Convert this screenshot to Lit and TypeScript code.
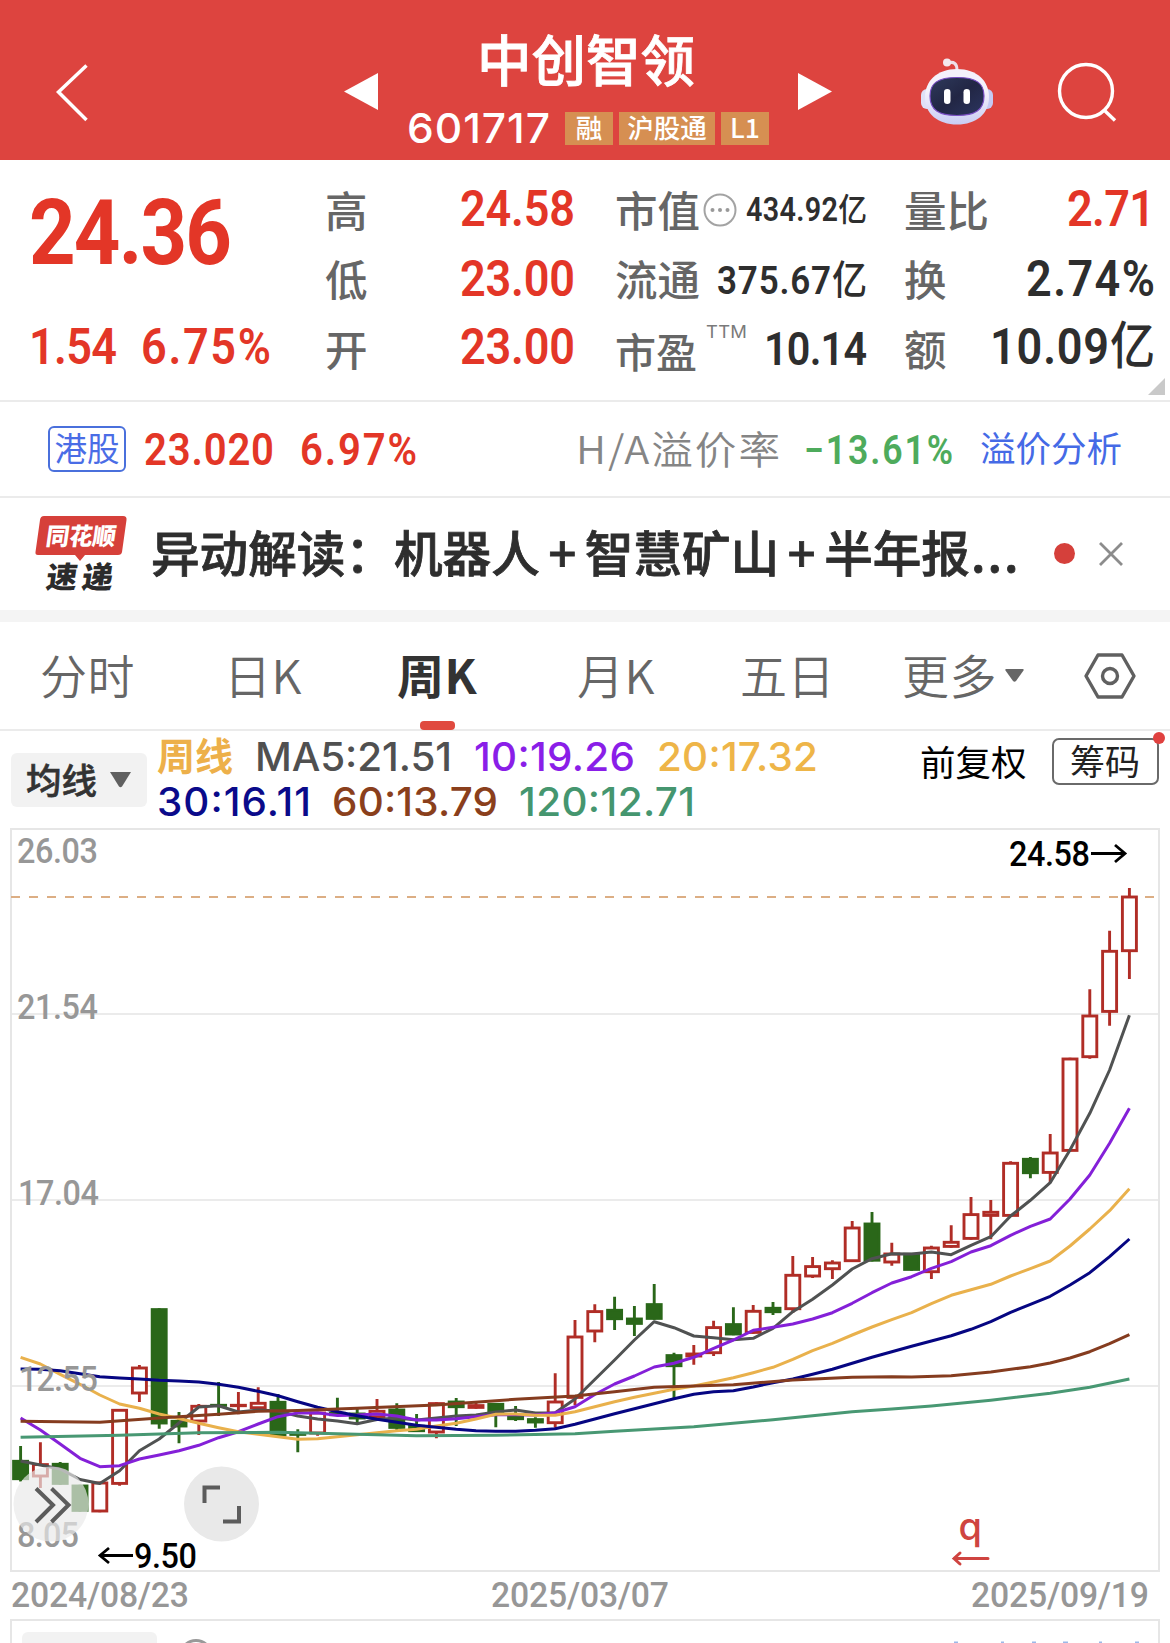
import { LitElement, html, svg, css } from "lit";
import { customElement, property } from "lit/decorators.js";

/* Cap height as a share of the font size, per family. */
const CAP: Record<string, number> = { din: 0.711, date: 0.711, cjk: 0.733, sf: 0.727 };
/* Horizontal scale of the glyphs, per face. */
const SCALE: Record<string, number> = { din: 0.89, date: 0.94, cjk: 1.07, sf: 1.03 };

/** One run of figures, set to a fixed width; its box is as high as its capitals. */
@customElement("fit-text")
class FitText extends LitElement {
  @property() text = "";
  @property({ type: Number }) w = 100;
  @property({ type: Number }) cap = 30;
  @property() face = "din";

  static styles = css`
    :host { display: block; flex: none; line-height: 0; }
    svg { display: block; overflow: visible; }
    text { fill: currentColor; }
    .din, .date { font-family: Roboto, "Noto Sans CJK SC", sans-serif; }
    .cjk { font-family: "Noto Sans CJK SC", sans-serif; }
    .sf { font-family: Inter, "Noto Sans CJK SC", sans-serif; }
    .unit { font-weight: 500; }
  `;

  render() {
    const k = SCALE[this.face];
    const unit = this.text.endsWith("亿");
    const body = unit ? this.text.slice(0, -1) : this.text;
    return html`<svg width=${this.w} height=${this.cap}>
      <text class=${this.face} x="0" y=${this.cap} font-size=${this.cap / CAP[this.face]}
        transform="scale(${k} 1)" textLength=${this.w / k} lengthAdjust="spacing">${body}${unit ? svg`<tspan class="unit">亿</tspan>` : ""}</text>
    </svg>`;
  }
}

const fit = (text: string, w: number, cap: number, cls = "", face = "din") =>
  html`<fit-text class=${cls} .text=${text} .w=${w} .cap=${cap} .face=${face}></fit-text>`;

/* high, body top, body bottom, low, in page pixels; u = rise, d = fall */
type Candle = [number, number, number, number, "u" | "d"];
const CANDLES: Candle[] = [
  [1446, 1460, 1480, 1481.5, "d"], [1442.3, 1463.3, 1477.3, 1488, "u"], [1462, 1463, 1484.7, 1484.7, "d"],
  [1484.7, 1484.7, 1511.7, 1511.7, "d"], [1481.7, 1481.7, 1512.3, 1512.3, "u"], [1409, 1409, 1484.7, 1485.7, "u"],
  [1365, 1366.7, 1394.3, 1402, "u"], [1308.3, 1308.3, 1424.3, 1428.7, "d"], [1412, 1420, 1427.3, 1443.3, "d"],
  [1404, 1405, 1422.3, 1435, "u"], [1382, 1404, 1406.7, 1416, "d"], [1392, 1404, 1407, 1414.3, "u"],
  [1387.3, 1402, 1409, 1409, "u"], [1394, 1401, 1436.3, 1436.3, "d"], [1429.3, 1433, 1435.5, 1452.3, "d"],
  [1411.7, 1411.7, 1434.3, 1435.7, "u"], [1397.7, 1412, 1416, 1416, "d"], [1409, 1412.7, 1419.3, 1423, "d"],
  [1399, 1410, 1418, 1418, "u"], [1403.3, 1408.7, 1428.7, 1430, "d"], [1414, 1425, 1432, 1432, "d"],
  [1402.3, 1402.3, 1433.3, 1438.3, "u"], [1398, 1400.7, 1408, 1426, "d"], [1402.7, 1404.3, 1408.7, 1408.7, "u"],
  [1403, 1403, 1414.7, 1427.3, "d"], [1406, 1414.7, 1420, 1421, "d"], [1417.3, 1418.3, 1423.3, 1427.7, "d"],
  [1373.3, 1400.7, 1424, 1427.7, "u"], [1320, 1335.7, 1398.7, 1405, "u"], [1304.3, 1310.3, 1332.3, 1342.3, "u"],
  [1296.7, 1309, 1320, 1330, "d"], [1306, 1317.7, 1324.7, 1336, "d"], [1284, 1303.3, 1319.7, 1319.7, "d"],
  [1352.7, 1354.3, 1367, 1398.3, "d"], [1345, 1352.7, 1357.3, 1364.7, "u"], [1320.7, 1326.3, 1354, 1356, "u"],
  [1307.3, 1323.3, 1335.3, 1335.3, "d"], [1305, 1310, 1333.7, 1333.7, "u"], [1302, 1307, 1313, 1315, "d"],
  [1256, 1274, 1310, 1313, "u"], [1257, 1265.3, 1277.3, 1278, "u"], [1260.3, 1261.7, 1270, 1279, "u"],
  [1221, 1226.7, 1262, 1262, "u"], [1212, 1222.7, 1261.5, 1261.5, "d"], [1242.7, 1252.7, 1263.3, 1265.7, "u"],
  [1253, 1253, 1270.7, 1270.7, "d"], [1245.7, 1246.7, 1273, 1279, "u"], [1225.3, 1241, 1247.7, 1247.7, "u"],
  [1197, 1213.3, 1239.7, 1239.7, "u"], [1200, 1211, 1216.7, 1239.3, "u"], [1161.3, 1162, 1216.7, 1216.7, "u"],
  [1157, 1158, 1174, 1178.3, "d"], [1134, 1151.7, 1173.7, 1182.7, "u"], [1057.7, 1057.7, 1151.7, 1151.7, "u"],
  [989.3, 1014.7, 1058, 1058.7, "u"], [930.7, 950, 1012.7, 1025.7, "u"], [888, 895.7, 952, 979, "u"],
];

const seq = (ys: number[]): [number, number][] => ys.map((y, i) => [i, y]);
const LINES: { cls: string; pts: [number, number][] }[] = [
  { cls: "ma5", pts: seq([1461, 1465, 1469, 1479.5, 1483.5, 1470.7, 1450.7, 1439, 1423, 1407, 1405.7, 1412, 1410, 1411, 1416, 1419, 1421, 1423.7, 1419.5, 1418, 1420, 1418, 1416, 1415, 1412, 1410, 1413, 1412.7, 1399, 1379.5, 1360, 1340, 1321.7, 1327.7, 1336, 1337.7, 1339.7, 1338.3, 1328.3, 1311.7, 1299.3, 1285, 1269, 1258.7, 1253.7, 1254, 1252, 1254.7, 1245.3, 1236.7, 1216, 1200.3, 1182.7, 1150, 1113.3, 1070, 1015.3]) },
  { cls: "ma10", pts: seq([1418, 1430, 1444, 1458.3, 1466.7, 1465.7, 1459, 1455, 1450.7, 1445.3, 1437.7, 1431.7, 1424, 1416.7, 1412.9, 1412.7, 1415.5, 1415, 1414, 1416, 1420, 1420, 1418.7, 1416.7, 1414.7, 1414.7, 1415, 1412.7, 1406.7, 1394.5, 1384, 1376, 1367, 1363.3, 1357.3, 1348.3, 1340, 1330.3, 1327.3, 1324, 1319, 1312.7, 1303.3, 1292.7, 1283, 1276.7, 1268.3, 1261.7, 1252, 1245.7, 1235.3, 1226.3, 1219, 1199, 1175, 1143.3, 1108.3]) },
  { cls: "ma20", pts: seq([1357.3, 1364, 1374.3, 1384.3, 1395, 1404, 1408.3, 1414, 1418.5, 1423.3, 1427.7, 1431.7, 1434.3, 1436.7, 1439.3, 1438.7, 1436.7, 1434.7, 1432.7, 1430.7, 1429.3, 1426, 1423.3, 1419, 1414.3, 1414, 1415.3, 1415.3, 1411.7, 1406.7, 1401.7, 1397.3, 1393.3, 1389.3, 1386, 1382, 1377.7, 1372.7, 1367.3, 1359.3, 1350.7, 1343.3, 1335, 1327, 1319.7, 1312.7, 1303.7, 1295.3, 1289.7, 1284.3, 1276, 1268.7, 1261, 1246, 1229, 1210.7, 1188.7]) },
  { cls: "ma120", pts: [[0, 1437.3], [5, 1435.3], [9, 1432.7], [13, 1432.3], [17, 1434.3], [20, 1435.7], [24, 1435.3], [28, 1433.7], [30, 1431.3], [34, 1426.7], [38, 1419.7], [42, 1411.7], [44, 1409], [46, 1406], [49, 1400.3], [52, 1393.3], [54, 1387.3], [56, 1379]] },
  { cls: "ma30", pts: seq([1369, 1369.3, 1370.7, 1373.7, 1376.7, 1378, 1379, 1380.3, 1380.9, 1382, 1384.3, 1387.3, 1391.3, 1395.7, 1401.7, 1407.3, 1411.7, 1415.7, 1419.3, 1422.3, 1425.3, 1427.3, 1429.3, 1430.7, 1431.3, 1431.3, 1430.3, 1428.7, 1424.3, 1419, 1413.7, 1408.7, 1403.7, 1398.7, 1394.3, 1391.7, 1390.7, 1387, 1382.7, 1379, 1374.3, 1369.3, 1363.3, 1357.3, 1351.7, 1346.3, 1341, 1335.7, 1329.3, 1321.7, 1312.3, 1304.3, 1296.3, 1285, 1272.7, 1256.7, 1239]) },
  { cls: "ma60", pts: [[0, 1421.3], [4, 1422.3], [7, 1418], [10, 1414.3], [12, 1411.3], [14, 1410.5], [17, 1408.3], [21, 1405], [25, 1399.3], [28, 1396], [30, 1391.7], [32, 1387.3], [36, 1384.7], [39, 1380], [42, 1377.3], [44, 1376.7], [45, 1377], [47, 1375.7], [49, 1372], [51, 1366.7], [52, 1363], [53, 1358], [54, 1351.7], [55, 1343.7], [56, 1334.7]] },
];

const cx = (i: number) => 20.6 + 19.8 * i;
const path = (pts: [number, number][]) => pts.map(([i, y], k) => `${k ? "L" : "M"}${cx(i).toFixed(1)} ${y}`).join("");

@customElement("k-chart")
class KChart extends LitElement {
  static styles = css`
    :host { display: block; height: 745px; }
    svg { display: block; overflow: visible; }
    .frame { fill: none; stroke: #e6e6e6; stroke-width: 2; }
    .grid { stroke: #ebebeb; stroke-width: 2; }
    .dash { stroke: #dcae84; stroke-width: 1.8; stroke-dasharray: 9 9; }
    .u { stroke: #b02d26; stroke-width: 2.9; fill: #fff; }
    .d { stroke: #2a6719; stroke-width: 2.9; fill: #2a6719; }
    .line { fill: none; stroke-width: 3; stroke-linejoin: round; }
    .ma5 { stroke: #505252; }
    .ma10 { stroke: #8420d8; }
    .ma20 { stroke: #e9b14c; }
    .ma30 { stroke: #060682; }
    .ma60 { stroke: #853c1f; }
    .ma120 { stroke: #489873; }
    text { font-family: Roboto, "Noto Sans CJK SC", sans-serif; font-size: 36px; fill: #979797; font-weight: 500; }
    .peak { fill: #000; stroke: none; }
    .arrow { stroke: #000; stroke-width: 2.8; fill: none; }
    .q { fill: #cf4440; font-family: Inter, sans-serif; font-size: 38px; font-weight: 500; }
    .qa { stroke: #cf4440; stroke-width: 3; fill: none; stroke-linecap: round; }
    .disc { fill: #e9e9e9; }
    .veil { opacity: 0.68; }
    .glyph { fill: none; stroke: #5c5c5c; stroke-width: 4; }
  `;

  private candle(c: Candle, i: number) {
    const [hi, top, bot, lo, k] = c;
    const x = cx(i), t = top + 1.3, b = Math.max(bot - 1.3, t + 0.1);
    return svg`<g class=${k}>
      <path d=${`M${x} ${hi}V${t}M${x} ${b}V${lo}`} />
      <rect x=${x - 7} y=${t} width="14" height=${b - t} />
    </g>`;
  }

  private label(t: string, x: number, y: number, w: number, cls = "") {
    const k = 0.9;
    return svg`<text class=${cls} transform="translate(${x} ${y}) scale(${k} 1)" textLength=${w / k} lengthAdjust="spacing">${t}</text>`;
  }

  render() {
    return html`<svg width="1170" height="745" viewBox="0 828 1170 745">
      <path class="grid" d="M11 1014H1159M11 1200H1159M11 1386H1159" />
      <rect class="frame" x="11" y="829" width="1148" height="742" />
      <path class="dash" d="M11 897H1155" />
      ${CANDLES.map((c, i) => this.candle(c, i))}
      ${LINES.map((l) => svg`<path class="line ${l.cls}" d=${path(l.pts)} />`)}
      ${this.label("26.03", 17, 863, 81)}
      ${this.label("21.54", 17, 1019, 81)}
      ${this.label("17.04", 18, 1205, 81)}
      ${this.label("12.55", 19, 1391, 79)}
      ${this.label("8.05", 17, 1547, 62)}
      ${this.label("24.58", 1009, 866, 81, "peak")}
      <path class="arrow" d="M1091 853.5H1125M1115 845L1125 853.5L1115 862" />
      ${this.label("9.50", 134, 1567.5, 63, "peak")}
      <path class="arrow" d="M133 1555.5H100M109 1548L100 1555.5L109 1563" />
      <circle class="disc veil" cx="51" cy="1504" r="37.5" />
      <circle class="disc" cx="221.5" cy="1504" r="37.5" />
      <path class="glyph" d="M36 1488.5L53 1505L36 1522M51.5 1488.5L68.5 1505L51.5 1522" />
      <path class="glyph" d="M204.5 1503V1487.5H220M239 1506V1521.5H223" />
      <text class="q" x="958.5" y="1540">q</text>
      <path class="qa" d="M988 1558.5H954M960 1553L954 1558.5L960 1564" />
    </svg>`;
  }
}

@customElement("app-root")
class AppRoot extends LitElement {
  static styles = css`
    :host { display: block; width: 1170px; height: 1643px; overflow: hidden; background: #fff;
      font-family: "Noto Sans CJK SC", sans-serif; color: #2e2e2e; line-height: 1; }
    * { box-sizing: border-box; }
    svg { display: block; flex: none; overflow: visible; }
    div, span { white-space: nowrap; }
    .red { color: #e33627; }

    .head { height: 160px; background: #dd443f; color: #fff; display: flex; align-items: flex-start; }
    .back { margin: 64px 0 0 56px; }
    .prev { margin: 73px 0 0 256px; }
    .id { margin: 30px 0 0 28px; width: 364px; display: flex; flex-direction: column; align-items: center; }
    .name { font-size: 54.5px; line-height: 56px; font-weight: 500; -webkit-text-stroke: 0.8px #fff; margin-left: -4px; }
    .code { display: flex; align-items: center; gap: 6px; margin-top: 25px; height: 34px; }
    .code fit-text { margin: -1px 9px 0 0; font-weight: 500; }
    .tag { height: 33px; background: #d68f52; font-size: 26.5px; line-height: 30px; text-align: center; font-weight: 500; width: 48px; }
    .tag.wide { width: 96px; }
    .next { margin: 73px 0 0 28px; }
    .bot { margin: 57px 0 0 89px; }
    .find { margin: 61px 0 0 63px; }

    .quote { height: 242px; border-bottom: 2px solid #ebebeb; display: flex; padding: 16px 0 0 29px; position: relative; }
    .now { width: 297px; padding-top: 23px; }
    .now .price { font-weight: 700; }
    .diff { display: flex; gap: 24px; margin-top: 64px; font-weight: 600; }
    .col { display: flex; flex-direction: column; font-weight: 500; }
    .col fit-text { font-weight: 600; }
    .c1 { width: 249px; margin-right: 41px; }
    .c2 { width: 251px; margin-right: 38px; }
    .c3 { width: 250px; }
    .row { height: 69.5px; display: flex; align-items: center; }
    .row fit-text { margin-left: auto; }
    .lab { color: #666; font-size: 42.5px; line-height: 60px; margin: -4px 0 0 -1px; }
    .lab.low { font-size: 41px; margin-top: 1px; }
    .row .info { margin-left: 3px; margin-top: -1px; }
    .row fit-text.ttm { margin: -37px 0 0 9px; color: #7a7a7a; font-weight: 400; }
    .r1 fit-text { margin-top: -5px; }
    .r1 fit-text.small { margin-top: -3px; }
    .r2 fit-text { margin-top: -5px; }
    .r2 fit-text.mid { margin-top: -1px; }
    .r3 fit-text { margin-top: -7px; }
    .r3 fit-text.pe { margin-top: -3px; }
    .corner { position: absolute; left: 1148px; top: 218px; }

    .hk { height: 96px; border-bottom: 2px solid #ebebeb; display: flex; align-items: center; padding-left: 48px; }
    .hk .mark { width: 78px; height: 46px; border: 2px solid #4a70dc; border-radius: 6px; color: #4a6de6; font-size: 32.5px; line-height: 38px; text-align: center; margin-right: 18px; }
    .hk .v { font-weight: 600; margin-right: 26px; }
    .hk .ha { color: #858585; font-weight: 350; margin: 1px 24px 0 auto; }
    .hk .g { color: #4eab5c; font-weight: 600; margin-right: 27px; }
    .hk .link { color: #456ae6; font-size: 35.5px; font-weight: 400; margin-right: 48px; margin-top: -5px; }

    .news { height: 112px; display: flex; align-items: center; }
    .logo { margin: -1px 0 0 35px; }
    .logo text { font-family: "Noto Sans CJK SC", sans-serif; font-weight: 900; }
    .lt { fill: #fff; font-size: 24px; }
    .lb { fill: #2b2b2b; font-size: 30px; }
    .title { font-size: 48.6px; font-weight: 500; -webkit-text-stroke: 0.8px #2e2e2e; flex: 1; margin-left: 24px; line-height: 60px; margin-top: -7px; }
    .plus { display: inline-block; width: 45px; text-align: center; }
    .more { letter-spacing: 2px; margin-left: 1px; }
    .dot { width: 21px; height: 21px; border-radius: 50%; background: #d5403b; margin-top: -1px; }
    .close { margin: -1px 47px 0 24px; }
    .band { height: 12px; background: #f4f4f4; }

    .tabs { height: 109px; border-bottom: 2px solid #ebebeb; display: grid; align-items: center; padding: 0 0 0 40px; grid-template-columns: 184px 173px 180px 163px 162px 182px 52px; color: #666; font-size: 47px; font-weight: 350; }
    .tab { line-height: 60px; display: flex; align-items: center; gap: 8px; position: relative; width: max-content; margin-top: -4px; letter-spacing: 0.5px; }
    .tab.on { color: #333; font-weight: 600; }
    .tab.on::after { content: ""; position: absolute; left: 50%; margin-left: -17px; bottom: -26px; width: 35px; height: 9px; border-radius: 4px; background: #e04a3f; }
    .tab svg { margin-top: 4px; }

    .ma { height: 97px; display: flex; padding-left: 11px; }
    .pick { width: 136px; height: 54px; margin-top: 22px; background: #f2f2f2; border-radius: 6px; display: flex; align-items: center; padding-left: 15px; gap: 13px; font-size: 35.5px; font-weight: 500; color: #333; -webkit-text-stroke: 0.6px #333; }
    .pick span { line-height: 50px; margin-top: -3px; }
    .vals { margin: 11px 0 0 10px; width: 763px; font-weight: 500; }
    .l1, .l2 { display: flex; align-items: center; }
    .l1 { height: 28px; }
    .l2 { height: 29px; margin-top: 17px; gap: 21px; }
    .wk { font-size: 38px; line-height: 40px; font-weight: 600; color: #edb04a; margin-right: 22px; margin-top: -4px; }
    .l1 fit-text { margin-right: 22px; }
    .k5 { color: #505050; } .k10 { color: #8a1ee8; } .k20 { color: #eeb548; }
    .k30 { color: #0a0a8a; } .k60 { color: #8a3f1c; } .k120 { color: #45966f; }
    .adj { font-size: 35.5px; color: #000; line-height: 50px; margin-top: 5px; }
    .chip { width: 107px; height: 47px; margin: 7px 0 0 25px; border: 2px solid #6a6a6a; border-radius: 7px; font-size: 35px; line-height: 39px; text-align: center; color: #222; position: relative; }
    .chip::after { content: ""; position: absolute; right: -8px; top: -8px; width: 12px; height: 12px; border-radius: 50%; background: #e0413f; }

    .dates { height: 46px; display: flex; justify-content: space-between; align-items: flex-start; padding: 8px 21px 0 11px; color: #979797; font-weight: 500; }
    .sub { margin: 0 10px; border: 2px solid #e6e6e6; border-bottom: 0; height: 24px; display: flex; overflow: hidden; }
    .stub { width: 135px; height: 40px; border-radius: 6px; background: #f2f2f2; margin: 11px 0 0 10px; }
    .ring { width: 34px; height: 34px; border: 3px solid #999; border-radius: 50%; margin: 18px 0 0 22px; }
    .ticks { margin: 20px 0 0 741px; }
  `;

  render() {
    return html`
      <div class="head">
        <svg class="back" width="32" height="58" viewBox="0 0 32 58"><path d="M30.5 1.5L2.5 28L30.5 56" fill="none" stroke="#fff" stroke-width="3.5" /></svg>
        <svg class="prev" width="34" height="38"><path d="M34 0V37L0 18.5Z" fill="#fff" /></svg>
        <div class="id">
          <div class="name">中创智领</div>
          <div class="code">${fit("601717", 143, 30, "", "sf")}
            <span class="tag">融</span><span class="tag wide">沪股通</span><span class="tag">L1</span>
          </div>
        </div>
        <svg class="next" width="34" height="38"><path d="M0 0V37L34 18.5Z" fill="#fff" /></svg>
        <svg class="bot" width="72" height="68" viewBox="0 0 72 68">
          <defs>
            <linearGradient id="shell" x1="0" y1="0" x2="0" y2="1"><stop offset="0.4" stop-color="#f4f1fb" /><stop offset="1" stop-color="#c9cdf4" /></linearGradient>
            <linearGradient id="face" x1="0" y1="0" x2="1" y2="1"><stop offset="0" stop-color="#2e3a5c" /><stop offset="0.5" stop-color="#222644" /><stop offset="1" stop-color="#2b3560" /></linearGradient>
          </defs>
          <path d="M27 6C33 4 36 7 36 13" fill="none" stroke="#eedfe8" stroke-width="3" />
          <circle cx="26" cy="5.5" r="4" fill="#f4e8ee" />
          <rect x="0" y="32" width="14" height="20" rx="6" fill="#dfe0f6" />
          <rect x="58" y="32" width="14" height="20" rx="6" fill="#c5caf3" />
          <path d="M36 12C56 12 68 24 68 40C68 57 55 67.5 36 67.5C17 67.5 4 57 4 40C4 24 16 12 36 12Z" fill="url(#shell)" />
          <path d="M36 20.5C55 20.5 63 26 63 39C63 53 54 58.5 36 58.5C18 58.5 9 53 9 39C9 26 17 20.5 36 20.5Z" fill="url(#face)" stroke="#7a4fc4" stroke-width="1.2" />
          <rect x="23" y="32" width="6.5" height="15" rx="3.2" fill="#fff" />
          <rect x="42.5" y="32" width="6.5" height="15" rx="3.2" fill="#fff" />
        </svg>
        <svg class="find" width="60" height="62" viewBox="0 0 60 62"><g fill="none" stroke="#fff" stroke-width="3.4"><circle cx="30" cy="30" r="26.5" /><path d="M48 49L59 59.5" /></g></svg>
      </div>

      <div class="quote">
        <div class="now">
          <div class="price red">${fit("24.36", 203, 65)}</div>
          <div class="diff red">${fit("1.54", 88, 36)}${fit("6.75%", 130, 36)}</div>
        </div>
        <div class="col c1">
          <div class="row r1"><span class="lab">高</span>${fit("24.58", 115, 36, "red")}</div>
          <div class="row r2"><span class="lab">低</span>${fit("23.00", 115, 36, "red")}</div>
          <div class="row r3"><span class="lab">开</span>${fit("23.00", 115, 36, "red")}</div>
        </div>
        <div class="col c2">
          <div class="row r1"><span class="lab">市值</span>
            <svg class="info" width="34" height="34"><circle cx="17" cy="17" r="15.5" fill="none" stroke="#a3a3a3" stroke-width="2" /><g fill="#999"><circle cx="9.5" cy="17" r="2" /><circle cx="17" cy="17" r="2" /><circle cx="24.5" cy="17" r="2" /></g></svg>
            ${fit("434.92亿", 121, 23, "small")}</div>
          <div class="row r2"><span class="lab">流通</span>${fit("375.67亿", 150, 28, "mid")}</div>
          <div class="row r3"><span class="lab low">市盈</span>${fit("TTM", 41, 13, "ttm", "sf")}${fit("10.14", 103, 33, "pe")}</div>
        </div>
        <div class="col c3">
          <div class="row r1"><span class="lab">量比</span>${fit("2.71", 88, 36, "red")}</div>
          <div class="row r2"><span class="lab">换</span>${fit("2.74%", 129, 36)}</div>
          <div class="row r3"><span class="lab">额</span>${fit("10.09亿", 165, 36)}</div>
        </div>
        <svg class="corner" width="17" height="17"><path d="M17 0V17H0Z" fill="#c9c9c9" /></svg>
      </div>

      <div class="hk">
        <span class="mark">港股</span>
        ${fit("23.020", 130, 32, "v red")}${fit("6.97%", 117, 32, "v red")}
        ${fit("H/A溢价率", 204, 28.5, "ha", "cjk")}
        ${fit("−13.61%", 149, 28.5, "g")}
        <span class="link">溢价分析</span>
      </div>

      <div class="news">
        <svg class="logo" width="92" height="76" viewBox="0 0 92 76">
          <path d="M9 0H88Q92 0 91.5 4L87 36Q86.5 39 83 39H50L45 45L40 39H3Q0 39 0.5 36L5 4Q5.5 0 9 0Z" fill="#d6403a" />
          <g transform="skewX(-8)">
            <text class="lt" x="14" y="29" textLength="70" lengthAdjust="spacingAndGlyphs">同花顺</text>
            <text class="lb" x="20" y="72" textLength="31" lengthAdjust="spacingAndGlyphs">速</text>
            <text class="lb" x="56" y="72" textLength="31" lengthAdjust="spacingAndGlyphs">递</text>
          </g>
        </svg>
        <div class="title">异动解读：机器人<span class="plus">+</span>智慧矿山<span class="plus">+</span>半年报<span class="more">...</span></div>
        <span class="dot"></span>
        <svg class="close" width="24" height="24"><path d="M1 1L23 23M23 1L1 23" stroke="#8c8c8c" stroke-width="2.8" /></svg>
      </div>
      <div class="band"></div>

      <div class="tabs">
        <span class="tab">分时</span><span class="tab">日K</span><span class="tab on">周K</span>
        <span class="tab">月K</span><span class="tab">五日</span>
        <span class="tab">更多<svg width="19" height="13"><path d="M1 0H18Q19 0 18.5 1.5L11 12Q9.5 13.5 8 12L0.5 1.5Q0 0 1 0Z" fill="#666" /></svg></span>
        <svg width="52" height="46" viewBox="0 0 52 46"><g fill="none" stroke="#606060" stroke-width="3.4"><path d="M14 2H38L50 23L38 44H14L2 23Z" stroke-linejoin="round" /><circle cx="26" cy="23" r="7.5" /></g></svg>
      </div>

      <div class="ma">
        <div class="pick"><span>均线</span><svg width="21" height="16"><path d="M0 0H21L12 14.5Q10.5 16 9 14.5Z" fill="#606060" /></svg></div>
        <div class="vals">
          <div class="l1"><span class="wk">周线</span>${fit("MA5:21.51", 197, 28.5, "k5", "sf")}${fit("10:19.26", 161, 28.5, "k10", "sf")}${fit("20:17.32", 161, 28.5, "k20", "sf")}</div>
          <div class="l2">${fit("30:16.11", 154, 28.5, "k30", "sf")}${fit("60:13.79", 166, 28.5, "k60", "sf")}${fit("120:12.71", 176, 28.5, "k120", "sf")}</div>
        </div>
        <span class="adj">前复权</span>
        <span class="chip">筹码</span>
      </div>

      <k-chart></k-chart>
      <div class="dates">${fit("2024/08/23", 178, 25.5, "", "date")}${fit("2025/03/07", 178, 25.5, "", "date")}${fit("2025/09/19", 178, 25.5, "", "date")}</div>
      <div class="sub">
        <div class="stub"></div>
        <div class="ring"></div>
        <svg class="ticks" width="190" height="6"><path d="M0 1.5H4M47 1.5H50M78 1.5H82M109 1.5H114M145 1.5H148M181 1.5H185" stroke="#9bb8e8" stroke-width="2" /></svg>
      </div>
    `;
  }
}
